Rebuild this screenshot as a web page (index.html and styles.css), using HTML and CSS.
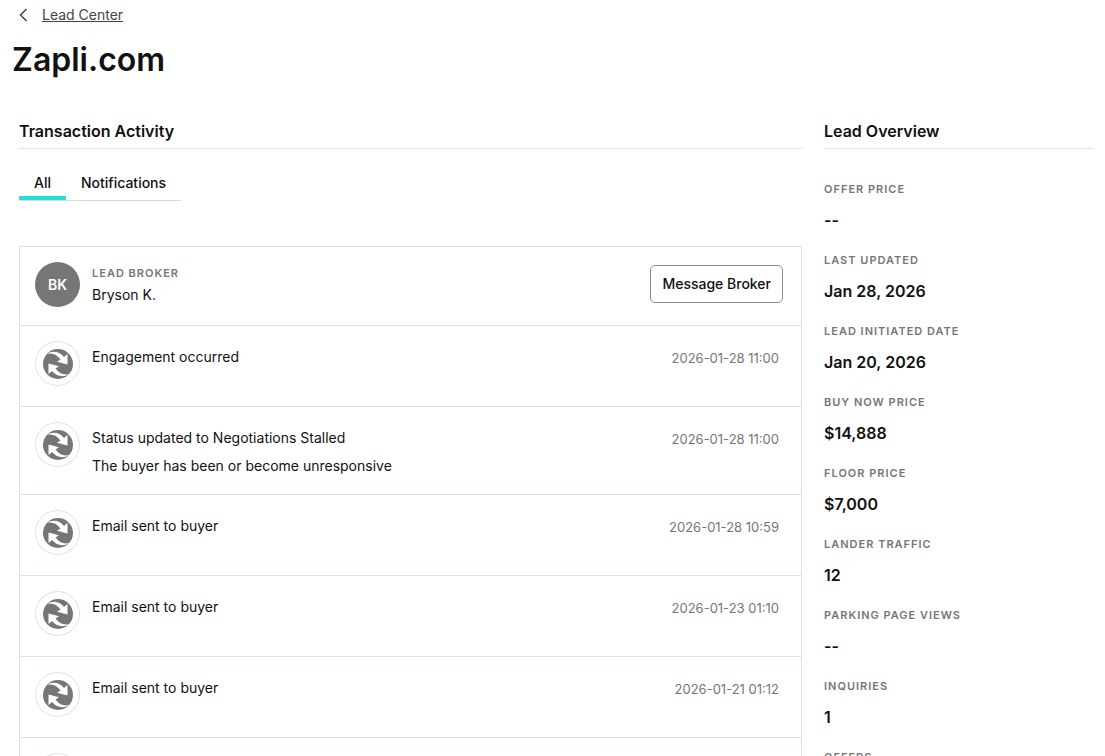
FILE: index.html
```
<!DOCTYPE html>
<html lang="en">
<head>
    <meta charset="UTF-8">
    <meta name="viewport" content="width=device-width, initial-scale=1.0">
    <title>Zapli.com - Lead Center</title>
    <link rel="stylesheet" href="styles.css">
</head>
<body>
    <!-- Shared icon for system events -->
    <svg class="sprite" width="0" height="0" aria-hidden="true">
        <symbol id="icon-sync" viewBox="0 0 30 30">
            <circle cx="15" cy="15" r="15" fill="#767676"/>
            <path fill="#fff" d="M4 5C9 1.500 16 2 21 8L24.500 5V15.500L14 12.800L17.500 10.500C14 5.500 9 3.500 4 5Z"/>
            <path fill="#fff" d="M26 25C21 28.500 14 28 9 22L5.500 25V14.500L16 17.200L12.500 19.500C16 24.500 21 26.500 26 25Z"/>
        </symbol>
    </svg>

    <header class="page-header">
        <nav class="breadcrumb">
            <svg class="back-icon" width="9" height="14" viewBox="0 0 9 14" aria-hidden="true">
                <path d="M7.500 1L1.500 7L7.500 13" fill="none" stroke="#444" stroke-width="1.500"/>
            </svg>
            <a href="#">Lead Center</a>
        </nav>
        <h1>Zapli.com</h1>
    </header>

    <main class="content">
        <section class="activity">
            <h2>Transaction Activity</h2>
            <div class="tabs" role="tablist">
                <button class="tab active" role="tab" aria-selected="true">All</button>
                <button class="tab" role="tab" aria-selected="false">Notifications</button>
            </div>

            <ul class="timeline">
                <li class="broker">
                    <span class="avatar">BK</span>
                    <div class="info">
                        <p class="label">Lead Broker</p>
                        <p class="name">Bryson K.</p>
                    </div>
                    <button class="message-button">Message Broker</button>
                </li>
                <li class="event">
                    <span class="badge"><svg width="30" height="30"><use href="#icon-sync"/></svg></span>
                    <div class="info">
                        <p>Engagement occurred</p>
                    </div>
                    <time>2026-01-28 11:00</time>
                </li>
                <li class="event">
                    <span class="badge"><svg width="30" height="30"><use href="#icon-sync"/></svg></span>
                    <div class="info">
                        <p>Status updated to Negotiations Stalled</p>
                        <p>The buyer has been or become unresponsive</p>
                    </div>
                    <time>2026-01-28 11:00</time>
                </li>
                <li class="event">
                    <span class="badge"><svg width="30" height="30"><use href="#icon-sync"/></svg></span>
                    <div class="info">
                        <p>Email sent to buyer</p>
                    </div>
                    <time>2026-01-28 10:59</time>
                </li>
                <li class="event">
                    <span class="badge"><svg width="30" height="30"><use href="#icon-sync"/></svg></span>
                    <div class="info">
                        <p>Email sent to buyer</p>
                    </div>
                    <time>2026-01-23 01:10</time>
                </li>
                <li class="event">
                    <span class="badge"><svg width="30" height="30"><use href="#icon-sync"/></svg></span>
                    <div class="info">
                        <p>Email sent to buyer</p>
                    </div>
                    <time>2026-01-21 01:12</time>
                </li>
                <li class="event">
                    <span class="badge"><svg width="30" height="30"><use href="#icon-sync"/></svg></span>
                </li>
            </ul>
        </section>

        <aside class="overview">
            <h2>Lead Overview</h2>
            <dl>
                <dt class="label">Offer Price</dt>
                <dd>--</dd>
                <dt class="label">Last Updated</dt>
                <dd>Jan 28, 2026</dd>
                <dt class="label">Lead Initiated Date</dt>
                <dd>Jan 20, 2026</dd>
                <dt class="label">Buy Now Price</dt>
                <dd>$14,888</dd>
                <dt class="label">Floor Price</dt>
                <dd>$7,000</dd>
                <dt class="label">Lander Traffic</dt>
                <dd>12</dd>
                <dt class="label">Parking Page Views</dt>
                <dd>--</dd>
                <dt class="label">Inquiries</dt>
                <dd>1</dd>
                <dt class="label">Offers</dt>
            </dl>
        </aside>
    </main>
</body>
</html>
```
FILE: styles.css
```
* {
    box-sizing: border-box;
}

body {
    font-family: Inter, "Liberation Sans", sans-serif;
    font-size: 14px;
    line-height: 28px;
    color: #111;
    margin: 0;
    background-color: #fff;
}

h1, h2, p, ul, dl, dd {
    margin: 0;
    padding: 0;
}

button {
    font-family: inherit;
    color: #111;
    background-color: #fff;
    cursor: pointer;
}

.sprite {
    display: block;
}

/* Header */
.page-header {
    padding: 5px 12px 0;
}

.breadcrumb {
    display: flex;
    align-items: center;
    gap: 14px;
    padding-left: 7px;
    line-height: 20px;
}

.breadcrumb a {
    color: #444;
}

h1 {
    font-size: 32px;
    line-height: 40px;
    font-weight: 600;
    margin-top: 15px;
}

h2 {
    font-size: 16px;
    line-height: 24px;
    font-weight: 600;
    padding-bottom: 5px;
    border-bottom: 1px solid #e3e3e3;
}

/* Columns */
.content {
    display: grid;
    grid-template-columns: minmax(0, 1fr) 269px;
    gap: 22px;
    padding: 39px 12px 0 19px;
}

/* Tabs */
.tabs {
    display: flex;
    width: fit-content;
    margin-top: 16px;
    border-bottom: 1px solid #d8dde0;
}

.tab {
    font-size: 14px;
    line-height: 20px;
    font-weight: 500;
    padding: 8px 15px 3px;
    border: 0;
    border-bottom: 4px solid transparent;
}

.tab.active {
    border-bottom-color: #2adbdb;
}

.tab + .tab {
    background: none;
}

/* Activity list */
.timeline {
    list-style: none;
    margin-top: 45px;
    border: 1px solid #dde2e4;
}

.timeline li {
    display: flex;
    gap: 12px;
    min-height: 81px;
    padding: 15px 22px 14px 15px;
    border-bottom: 1px solid #dde2e4;
}

.timeline .broker {
    min-height: 79px;
    padding-right: 18px;
}

.avatar, .badge {
    display: flex;
    align-items: center;
    justify-content: center;
    flex: none;
    width: 45px;
    height: 45px;
    border-radius: 50%;
}

.avatar {
    background-color: #767676;
    color: #fff;
    font-weight: 600;
}

.badge {
    border: 1px solid #dde2e4;
}

.info {
    flex: 1;
}

.event .info {
    padding-top: 2px;
}

.label {
    font-size: 11px;
    line-height: 20px;
    font-weight: 600;
    letter-spacing: 1px;
    text-transform: uppercase;
    color: #767676;
}

.broker .label {
    margin-top: 1px;
}

.broker .name {
    line-height: 24px;
}

.message-button {
    align-self: flex-start;
    font-size: 14px;
    line-height: 20px;
    font-weight: 500;
    padding: 8px 11px;
    margin-top: 3px;
    border: 1px solid #8a8a8a;
    border-radius: 5px;
}

.event time {
    font-size: 13px;
    color: #767676;
    margin-top: 3px;
}

/* Overview */
dl {
    margin-top: 30px;
}

dd {
    font-size: 16px;
    line-height: 24px;
    font-weight: 600;
    margin: 9px 0 18px;
}
```
